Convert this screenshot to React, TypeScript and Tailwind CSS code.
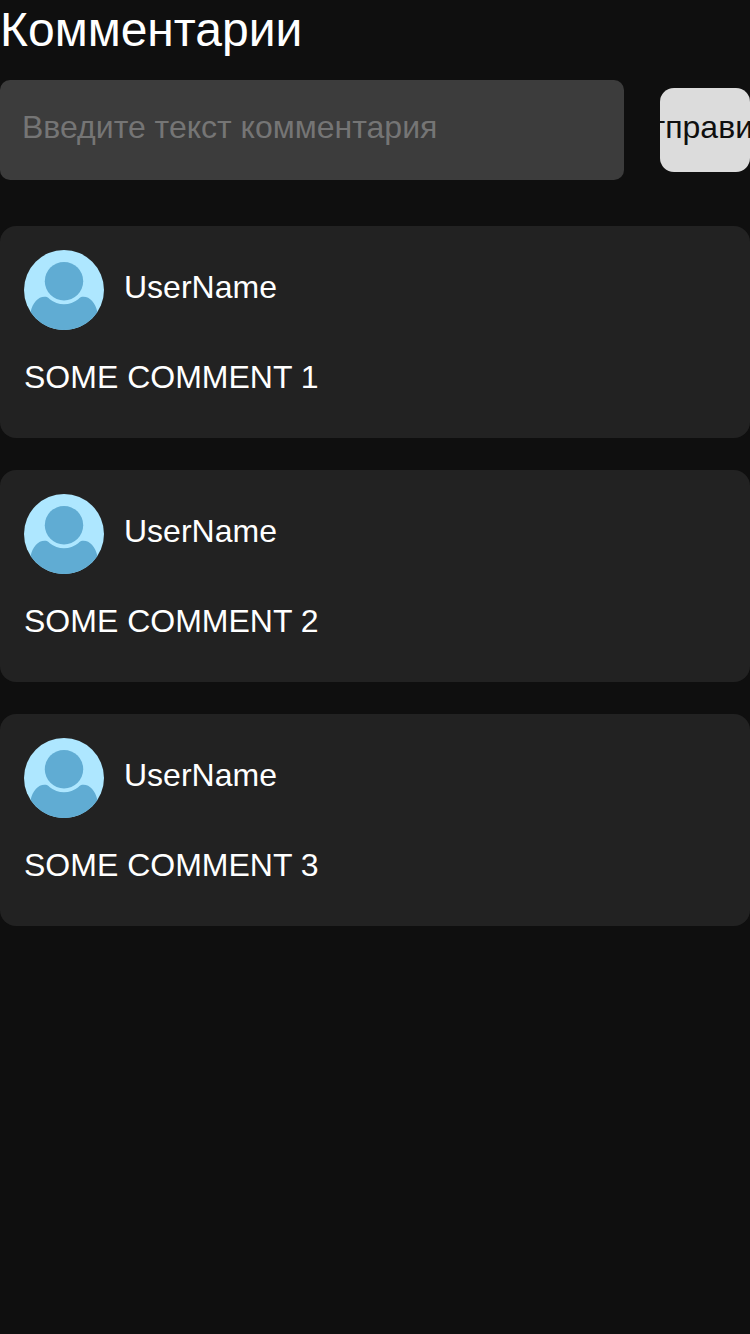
import React from "react";

type Comment = { id: number; author: string; text: string };

const comments: Comment[] = [
  { id: 1, author: "UserName", text: "SOME COMMENT 1" },
  { id: 2, author: "UserName", text: "SOME COMMENT 2" },
  { id: 3, author: "UserName", text: "SOME COMMENT 3" },
];

function Avatar() {
  return (
    <svg viewBox="0 0 80 80" className="size-20 shrink-0" aria-hidden="true">
      <circle cx="40" cy="40" r="40" fill="#aee7ff" />
      <circle cx="40" cy="31.2" r="19.2" fill="#60acd3" />
      <path
        d="M6.6 62C8.500 53 14 46.800 20.500 46.800C22.800 46.800 24 47.300 25.800 49.200A22.800 22.800 0 0 0 54.200 49.200C56 47.300 57.200 46.800 59.500 46.800C66 46.800 71.500 53 73.400 62A40 40 0 0 1 6.600 62Z"
        fill="#60acd3"
      />
    </svg>
  );
}

function CommentCard({ comment }: { comment: Comment }) {
  return (
    <li className="flex h-[212px] flex-col rounded-2xl bg-[#222222] p-6">
      <div className="flex gap-5">
        <Avatar />
        <span className="pt-[18px] text-[32px] leading-[38px]">{comment.author}</span>
      </div>
      <p className="mt-7 text-[32px] leading-[38px]">{comment.text}</p>
    </li>
  );
}

export default function App() {
  return (
    <main className="min-h-screen overflow-hidden bg-[#0f0f0f] font-['Liberation_Sans',Arial,sans-serif] text-white">
      <h1 className="pt-[2px] text-[48px] leading-[56px]">Комментарии</h1>
      <form className="mt-[22px] flex items-center justify-between" onSubmit={(e) => e.preventDefault()}>
        <input
          type="text"
          placeholder="Введите текст комментария"
          className="h-[100px] w-[624px] rounded-[10px] bg-[#3c3c3c] px-[22px] pb-1.5 text-[32px] outline-none placeholder:text-[#757575]"
        />
        <button
          type="submit"
          className="flex h-[84px] w-[90px] items-center justify-center rounded-[14px] bg-[#dcdcdc] pb-1.5 text-[32px] text-[#0f0f0f]"
        >
          Отправить
        </button>
      </form>
      <ul className="mt-[46px] flex flex-col gap-8">
        {comments.map((comment) => (
          <CommentCard key={comment.id} comment={comment} />
        ))}
      </ul>
    </main>
  );
}
